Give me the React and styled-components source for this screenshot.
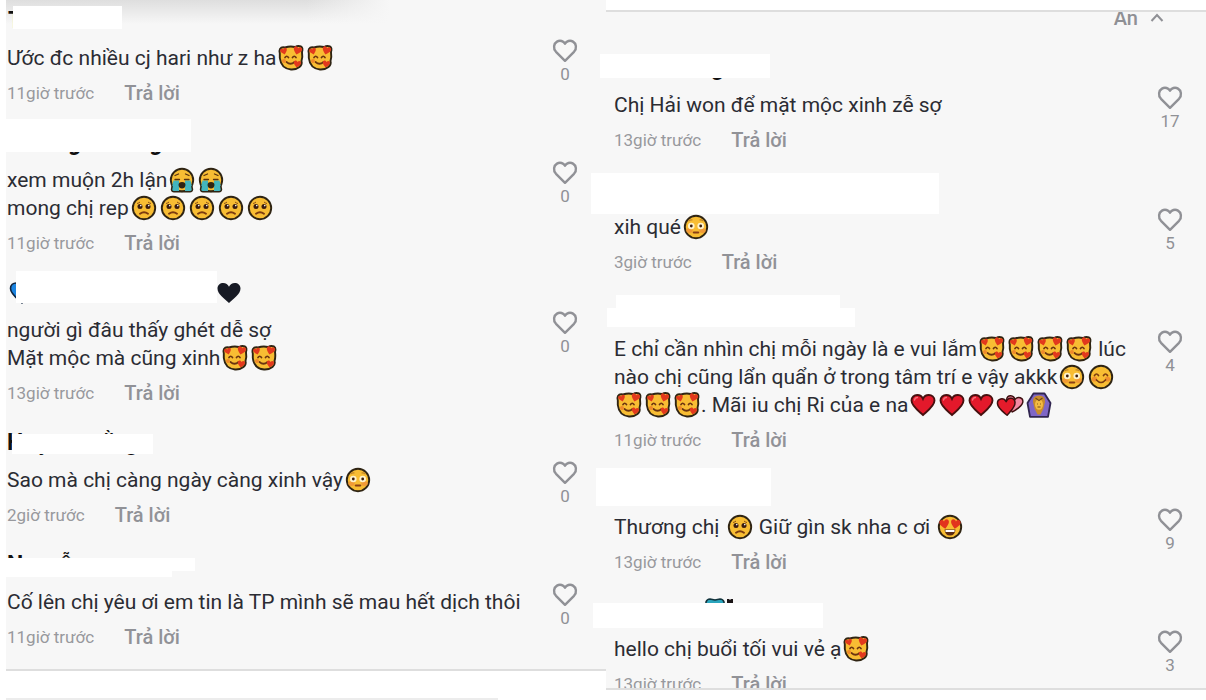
import React from 'react';
import styled, { createGlobalStyle } from 'styled-components';

const GlobalStyle = createGlobalStyle`
  *, *::before, *::after { box-sizing: border-box; }
  body {
    margin: 0;
    background: #fff;
    color: #2b2c33;
    font-family: Roboto, "Liberation Sans", sans-serif;
  }
`;

const Page = styled.main`
  display: grid;
  grid-template-columns: 1fr 1fr;
  height: 100vh;
  padding-left: 6px;
  overflow: hidden;
`;

const Column = styled.div`
  min-width: 0;
`;

const LeftPanel = styled.section`
  padding: 7px 25px 19px 1px;
  border-bottom: 2px solid #dedede;
  background:
    linear-gradient(90deg, rgba(247, 247, 247, 0) 50%, #f7f7f7 64%) 0 0 / 100% 24px no-repeat,
    linear-gradient(#dedede, #f7f7f7) 0 0 / 100% 24px no-repeat,
    #f7f7f7;
`;

const NextEdge = styled.div`
  width: 82%;
  margin-top: 27px;
  border-top: 2px solid #ececec;
`;

const RightPanel = styled.section`
  height: calc(100vh - 20px);
  margin: 10px 0;
  padding: 0 20px 0 8px;
  border-top: 2px solid #dedede;
  border-bottom: 2px solid #dedede;
  background: #f7f7f7;
  overflow-y: clip;
`;

const HideBar = styled.div`
  display: flex;
  justify-content: flex-end;
  height: 42px;
  padding-right: 22px;
`;

const HideButton = styled.button`
  display: flex;
  align-items: center;
  gap: 12px;
  height: 24px;
  margin-top: -6px;
  padding: 0;
  border: 0;
  background: none;
  color: #8f9095;
  font: 500 20px/24px Roboto, sans-serif;
`;

const List = styled.ul`
  display: flex;
  flex-direction: column;
  gap: 23px;
  margin: 0;
  padding: 0;
  list-style: none;
`;

const Item = styled.li`
  position: relative;
  display: flex;
  justify-content: space-between;
  height: ${(p) => 71 + p.$lines * 28}px;
`;

const Content = styled.div`
  min-width: 0;
  white-space: nowrap;
`;

const Name = styled.div`
  display: flex;
  align-items: center;
  height: 28px;
  margin-bottom: 9px;
  font-size: 23px;
  font-weight: 700;
  line-height: 28px;
  color: #111;
`;

const Glyph = styled.span`
  display: flex;
  margin-left: ${(p) => p.$gap}px;
`;

const Mask = styled.span`
  position: absolute;
  left: ${(p) => p.$x}px;
  top: ${(p) => p.$y}px;
  width: ${(p) => p.$w}px;
  height: ${(p) => p.$h}px;
  background: #fff;
`;

const Text = styled.p`
  margin: 0;
  font-size: 21px;
  line-height: 28px;
`;

const Line = styled.span`
  display: flex;
  align-items: center;
  height: 28px;
  white-space: pre;
`;

const Meta = styled.div`
  display: flex;
  align-items: center;
  gap: 30px;
  height: 26px;
  margin-top: 8px;
`;

const Time = styled.time`
  color: #98999d;
  font-size: 17px;
  line-height: 26px;
`;

const Reply = styled.button`
  padding: 0;
  border: 0;
  background: none;
  color: #919297;
  font: 500 20px/26px Roboto, sans-serif;
`;

const Like = styled.button`
  display: flex;
  flex-direction: column;
  align-items: center;
  width: 32px;
  height: 78px;
  padding: 31px 0 0;
  border: 0;
  background: none;
  color: #909196;
  font: 400 17px/20px Roboto, sans-serif;
`;

const Svg = styled.svg`
  flex: none;
  width: 26px;
  height: 26px;
  margin: 0 1px 0 2px;
  overflow: visible;
`;

const INK = '#2f2413';
const YELLOW = '#f8bd33';

const Disc = () => <circle cx="13" cy="13" r="11.200" fill={YELLOW} stroke={INK} strokeWidth="1.900" />;

const HEART = 'M13 23C8 18.5 1.5 14 1.5 8.6C1.5 5 4.200 3 7.200 3C9.800 3 12 4.500 13 6.800C14 4.500 16.200 3 18.800 3C21.800 3 24.500 5 24.500 8.600C24.500 14 18 18.500 13 23Z';
const MINI = 'M0 4C-2 2-4 .5-4-1.600C-4-4-1-4.400 0-2.200C1-4.400 4-4 4-1.600C4 .5 2 2 0 4Z';

const drawings = {
  '🥰': (
    <>
      <path d="M2 4Q3.500 1.500 7 2.500Q12 .8 17 2Q20 .4 23 1.500Q25.300 3 24 7Q24.800 12 23.500 16Q24.500 19.500 21.500 22Q18 24.800 13 24.500Q3 23.500 1.800 13V8.500Q1 6 2 4Z" fill={YELLOW} stroke={INK} strokeWidth="1.900" strokeLinejoin="round" />
      <path d="M7 12.500Q8.700 10 10.500 12.500M14.500 12.500Q16.200 10 18 12.500M8.500 17Q12.500 20.500 16.500 17" fill="none" stroke="#6b3410" strokeWidth="1.700" strokeLinecap="round" />
      <g fill="#e2391d">
        <path d={MINI} transform="translate(5.800 6.300) rotate(-15) scale(.85)" />
        <path d={MINI} transform="translate(19.500 5.500) rotate(15) scale(1.050)" />
        <path d={MINI} transform="translate(19.200 19) rotate(10) scale(.9)" />
      </g>
      <circle cx="6" cy="16" r="2" fill="#ef8a2b" />
    </>
  ),
  '😭': (
    <>
      <Disc />
      <path d="M4.500 13.500H10V24Q7.500 25 4 24.500Q2 24 3 20ZM16 13.500H21.500L23 20Q24 24 22 24.500Q18.500 25 16 24Z" fill="#43b5bd" />
      <path d="M3.200 19L2.500 22.500Q2.800 24.800 5 24.800H21Q23.200 24.800 23.500 22.500L22.800 19" fill="none" stroke={INK} strokeWidth="1.500" />
      <path d="M6 12.500H10.500M15.500 12.500H20M6 8.500L9.500 7M20 8.500L16.500 7" stroke="#5a3310" strokeWidth="1.300" strokeLinecap="round" />
      <path d="M9.500 18Q9.500 15 13 15T16.500 18Q16 21.500 13 21.500T9.500 18Z" fill={INK} />
    </>
  ),
  '🥺': (
    <>
      <Disc />
      <circle cx="9" cy="11.500" r="2.500" fill="#3b1d10" />
      <circle cx="17" cy="11.500" r="2.500" fill="#3b1d10" />
      <circle cx="9.800" cy="10.600" r=".8" fill="#fff" />
      <circle cx="17.800" cy="10.600" r=".8" fill="#fff" />
      <path d="M9 18.800Q13 15.800 17 18.800" fill="none" stroke="#7c3c10" strokeWidth="1.900" strokeLinecap="round" />
      <path d="M6 8.500Q8 8 9 7M20 8.500Q18 8 17 7" fill="none" stroke="#8a4d17" strokeWidth="1" />
    </>
  ),
  '😳': (
    <>
      <Disc />
      <ellipse cx="6.500" cy="16.500" rx="3.200" ry="2.500" fill="#f19a36" />
      <ellipse cx="19.500" cy="16.500" rx="3.200" ry="2.500" fill="#f19a36" />
      <circle cx="8.300" cy="12" r="3.300" fill="#fff4cd" />
      <circle cx="17.700" cy="12" r="3.300" fill="#fff4cd" />
      <circle cx="8.300" cy="12" r="1.400" fill="#3b1d10" />
      <circle cx="17.700" cy="12" r="1.400" fill="#3b1d10" />
      <path d="M5.500 7Q7.500 5.500 9.500 6M20.500 7Q18.500 5.500 16.500 6" fill="none" stroke="#c08427" strokeWidth="1.200" />
      <path d="M10.800 18.500H15.200" stroke="#8a3f16" strokeWidth="2.200" strokeLinecap="round" />
    </>
  ),
  '😊': (
    <>
      <Disc />
      <circle cx="6.500" cy="15" r="2.600" fill="#f0902f" />
      <circle cx="19.500" cy="15" r="2.600" fill="#f0902f" />
      <path d="M6.500 11.500Q8.500 8.500 10.500 11.500M15.500 11.500Q17.500 8.500 19.500 11.500M8.500 16Q13 21 17.500 16" fill="none" stroke="#7c3c10" strokeWidth="1.700" strokeLinecap="round" />
    </>
  ),
  '😍': (
    <>
      <Disc />
      <g fill="#e2331d">
        <path d={MINI} transform="translate(7.500 10) rotate(-10) scale(1.200)" />
        <path d={MINI} transform="translate(18.500 10) rotate(10) scale(1.200)" />
      </g>
      <path d="M7.500 15.500H18.500Q18 21.500 13 21.500T7.500 15.500Z" fill="#5b2b12" />
      <path d="M8.500 16H17.500V18H8.500Z" fill="#fff" />
    </>
  ),
  '❤️': (
    <>
      <path d={HEART} fill="#e3192b" stroke="#47100f" strokeWidth="1.900" />
      <path d="M4.500 8Q5 5.500 7.500 5.500" fill="none" stroke="#f5717a" strokeWidth="1.300" strokeLinecap="round" />
    </>
  ),
  '💙': <path d={HEART} fill="#1c84e0" stroke="#10243d" strokeWidth="1.600" />,
  '🖤': <path d={HEART} fill="#171a24" />,
  '💕': (
    <g stroke="#3d1010" strokeWidth=".7" strokeLinejoin="round">
      <path d={MINI} transform="translate(17 12) rotate(12) scale(2.050)" fill="#f389a4" />
      <path d={MINI} transform="translate(9.500 14.500) rotate(-4) scale(2.200)" fill="#e51b2b" />
    </g>
  ),
  '🙆': (
    <>
      <path d="M7.500 1.500H18.500L24.500 11L22 24.800H4L1.500 11Z" fill="#7f66c6" stroke="#30254f" strokeWidth="1.800" strokeLinejoin="round" />
      <path d="M13 3.500Q19.500 3.500 19 10Q18 17 14.500 22.500H11.500Q8 17 7 10Q6.500 3.500 13 3.500Z" fill="#c98c2b" />
      <ellipse cx="13" cy="12.500" rx="4" ry="5.200" fill="#f3bb42" />
      <path d="M9.500 6L13 8.500L16.500 6M11 12H11.800M14.200 12H15M11.500 15H14.500" fill="none" stroke="#744915" strokeWidth="1.100" />
    </>
  ),
  '🩵': (
    <>
      <path d="M0 10V3Q1 0 4 0L9 1L14 0Q17 0 18 3V10Z" fill="#2aa5bd" stroke="#12333c" strokeWidth="1.600" />
      <path d="M21 10V0H23L24 1L25 0H27V10Z" fill="#1a1416" />
    </>
  ),
};

const Emoji = ({ symbol }) => (
  <Svg viewBox="0 0 26 26" role="img" aria-label={symbol}>
    {drawings[symbol]}
  </Svg>
);

const emojiPattern = /(🥰|😭|🥺|😳|😊|😍|❤️|💙|🖤|💕|🙆)/u;

const RichLine = ({ children }) => (
  <Line>
    {children.split(emojiPattern).filter(Boolean).map((part, i) =>
      drawings[part] ? <Emoji key={i} symbol={part} /> : <span key={i}>{part}</span>
    )}
  </Line>
);

const HeartIcon = () => (
  <svg width="26" height="26" viewBox="0 0 26 26" fill="none" stroke="currentColor" strokeWidth="2.400" strokeLinejoin="round" aria-hidden="true">
    <path d="M13 22.800L4 13.800C.8 10.200 1.800 5.500 5 3.600C8 1.800 11.500 3 13 5.800C14.500 3 18 1.800 21 3.600C24.200 5.500 25.200 10.200 22 13.800Z" />
  </svg>
);

const Comment = ({ name = [], masks, lines, time, likes }) => (
  <Item $lines={lines.length}>
    <Content>
      <Name>
        {name.map(([char, gap], i) => (
          <Glyph key={i} $gap={gap}>{drawings[char] ? <Emoji symbol={char} /> : char}</Glyph>
        ))}
      </Name>
      <Text>
        {lines.map((line) => <RichLine key={line}>{line}</RichLine>)}
      </Text>
      <Meta>
        <Time>{time}</Time>
        <Reply type="button">Trả lời</Reply>
      </Meta>
    </Content>
    <Like type="button" aria-label={`Thích, ${likes}`}>
      <HeartIcon />
      <span>{likes}</span>
    </Like>
    {masks.map(([x, y, w, h]) => <Mask key={y} $x={x} $y={y} $w={w} $h={h} />)}
  </Item>
);

const leftComments = [
  { name: [['T', 1]], masks: [[6, -1, 109, 23]], lines: ['Ước đc nhiều cj hari như z ha🥰🥰'], time: '11giờ trước', likes: 0 },
  { name: [['g', 61], ['g', 68]], masks: [[-1, -10, 185, 33]], lines: ['xem muộn 2h lận😭😭', 'mong chị rep🥺🥺🥺🥺🥺'], time: '11giờ trước', likes: 0 },
  { name: [['💙', 0], ['🖤', 178]], masks: [[9, -8, 201, 32]], lines: ['người gì đâu thấy ghét dễ sợ', 'Mặt mộc mà cũng xinh🥰🥰'], time: '13giờ trước', likes: 0 },
  { name: [['H', 0], ['y', 15], ['ằ', 53], ['g', 10]], masks: [[5, 5, 141, 20]], lines: ['Sao mà chị càng ngày càng xinh vậy😳'], time: '2giờ trước', likes: 0 },
  { name: [['N', 0], ['g', 0], ['y', 12], ['ễ', 0], ['y', 74]], masks: [[-1, 7, 189, 13], [-1, 20, 166, 6]], lines: ['Cố lên chị yêu ơi em tin là TP mình sẽ mau hết dịch thôi'], time: '11giờ trước', likes: 0 },
];

const rightComments = [
  { name: [['g', 97]], masks: [[-14, 0, 170, 24]], lines: ['Chị Hải won để mặt mộc xinh zễ sợ'], time: '13giờ trước', likes: 17 },
  { masks: [[-23, -3, 348, 41]], lines: ['xih qué😳'], time: '3giờ trước', likes: 5 },
  { masks: [[2, -3, 224, 13], [-7, 10, 248, 19]], lines: ['E chỉ cần nhìn chị mỗi ngày là e vui lắm🥰🥰🥰🥰 lúc', 'nào chị cũng lẩn quẩn ở trong tâm trí e vậy akkk😳😊', '🥰🥰🥰. Mãi iu chị Ri của e na❤️❤️❤️💕🙆'], time: '11giờ trước', likes: 4 },
  { masks: [[-18, -8, 175, 38]], lines: ['Thương chị 🥺 Giữ gìn sk nha c ơi 😍'], time: '13giờ trước', likes: 9 },
  { name: [['🩵', 90]], masks: [[-21, 5, 230, 25]], lines: ['hello chị buổi tối vui vẻ ạ🥰'], time: '13giờ trước', likes: 3 },
];

export default function App() {
  return (
    <>
      <GlobalStyle />
      <Page>
        <Column>
          <LeftPanel>
            <List>{leftComments.map((c) => <Comment key={c.lines[0]} {...c} />)}</List>
          </LeftPanel>
          <NextEdge />
        </Column>
        <Column>
          <RightPanel>
            <HideBar>
              <HideButton type="button">
                Ẩn
                <svg width="14" height="10" viewBox="0 0 14 10" fill="none" stroke="currentColor" strokeWidth="2" aria-hidden="true">
                  <path d="M1.500 8L7 2L12.500 8" />
                </svg>
              </HideButton>
            </HideBar>
            <List>{rightComments.map((c) => <Comment key={c.lines[0]} {...c} />)}</List>
          </RightPanel>
        </Column>
      </Page>
    </>
  );
}
